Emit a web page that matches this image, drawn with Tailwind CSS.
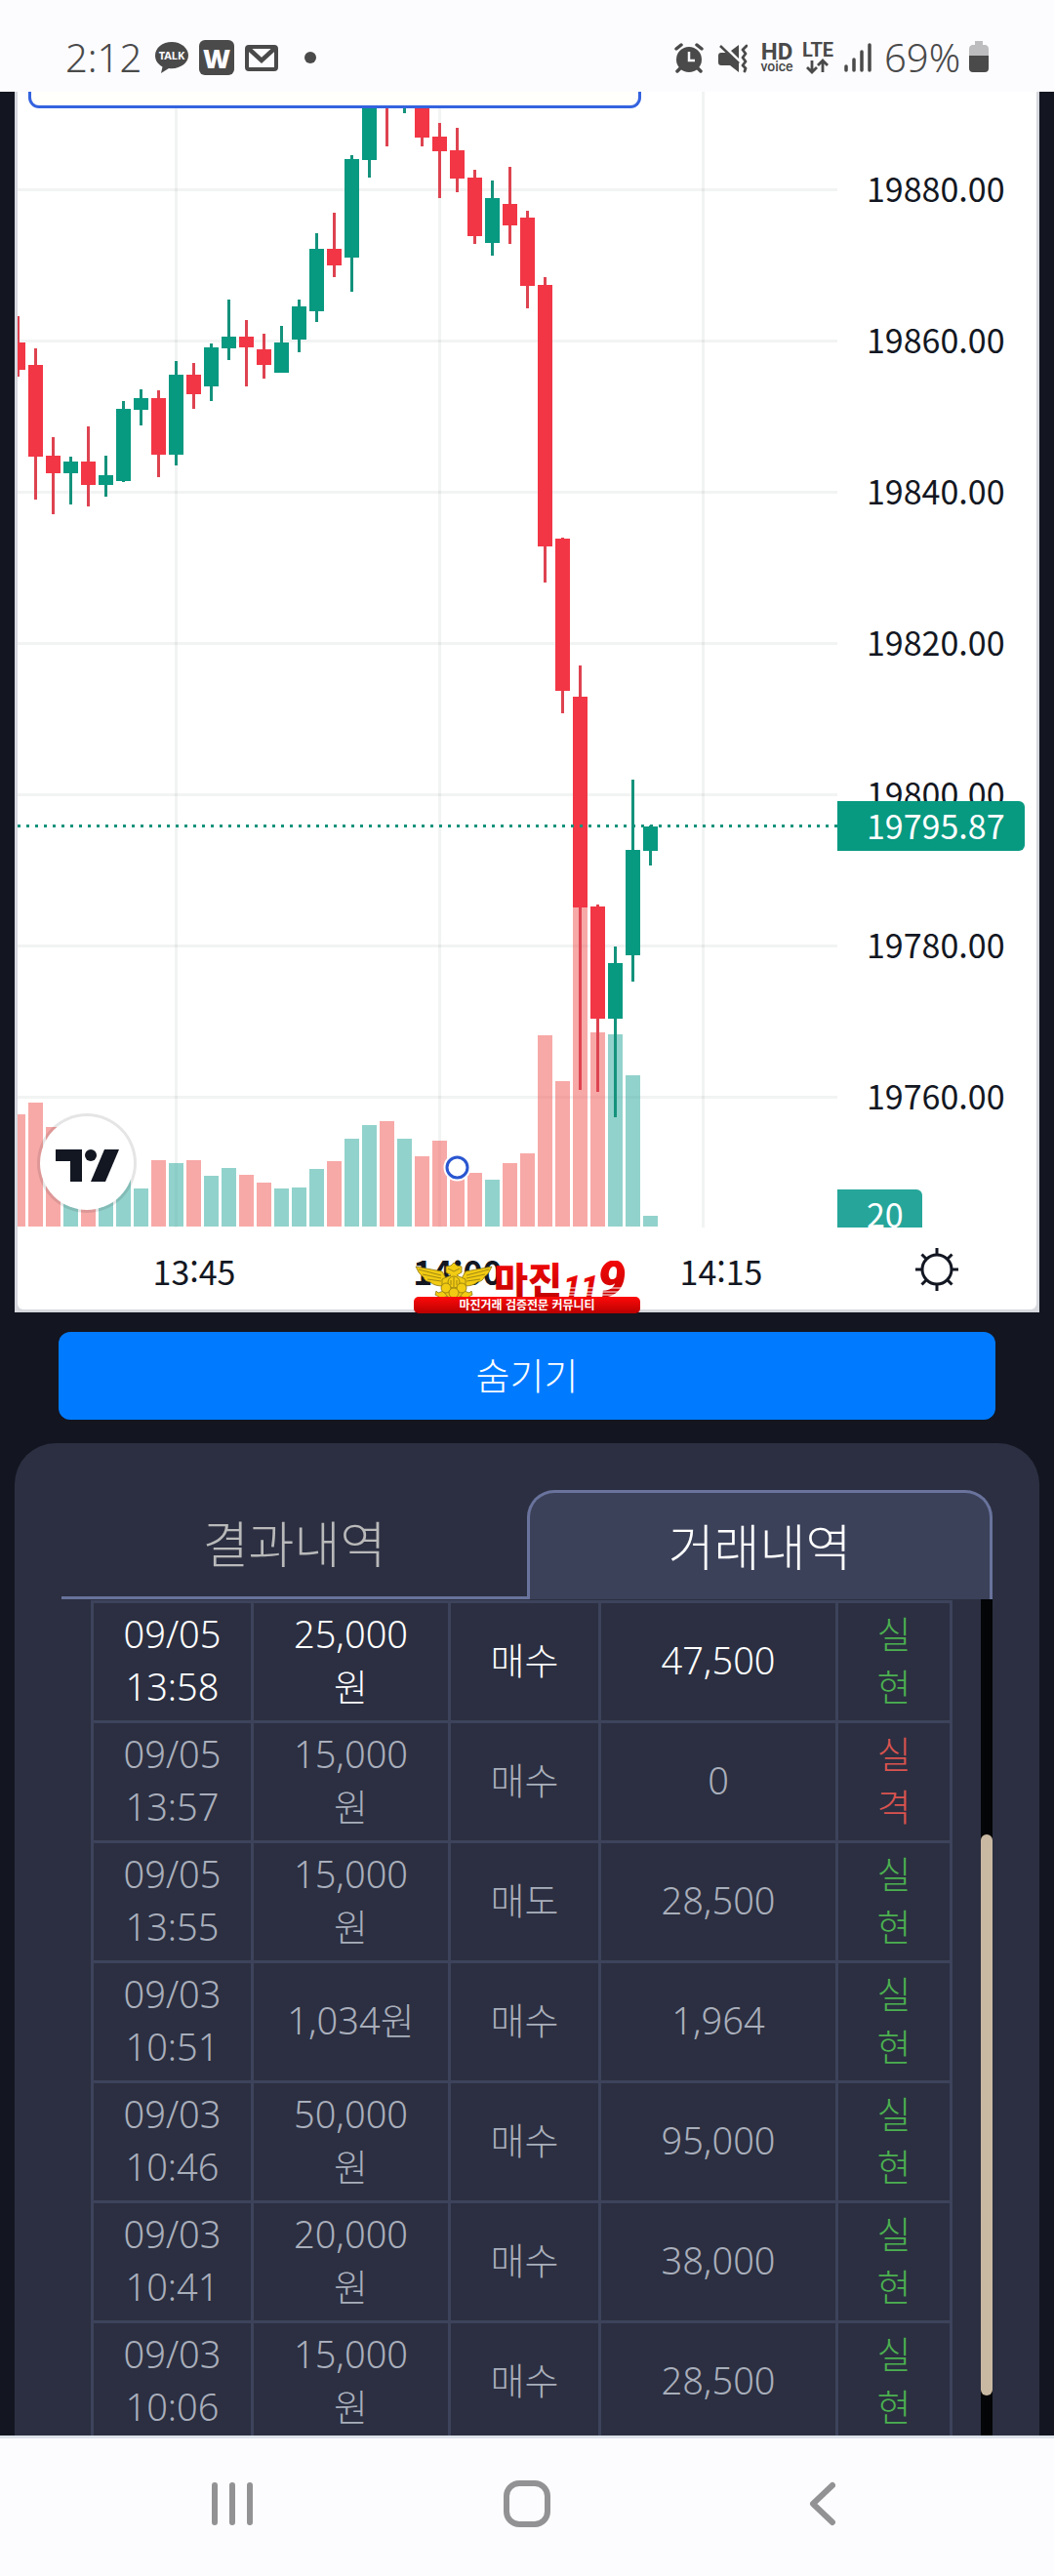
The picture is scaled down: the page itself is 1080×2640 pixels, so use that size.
<!DOCTYPE html>
<html lang="ko">
<head>
    <meta charset="UTF-8">
    <meta name="viewport" content="width=device-width, initial-scale=1.0">
    <title>거래내역</title>
    <script src="https://cdn.jsdelivr.net/npm/@tailwindcss/browser@4"></script>
</head>
<body class="flex h-screen flex-col overflow-hidden bg-[#131520] font-['Noto_Sans_CJK_KR',sans-serif]">
    <!-- 상태 표시줄 -->
    <header class="flex h-[94px] flex-none items-center justify-between bg-[#fcfcff] pt-6 pr-[66px] pl-[67px] text-[#4a4a4a]">
        <div class="flex items-center">
            <span class="w-[92px] font-['Noto_Sans','Noto_Sans_CJK_KR',sans-serif] text-[40px] leading-9 font-light">2:12</span>
            <svg class="h-9 w-[34px]" viewBox="0 0 34 36" aria-hidden="true">
                <path fill="currentColor" d="M17 2C7.500 2 0 8 0 16c0 5 3 9 7.500 11.500L6 34l8-5c1 .2 2 .2 3 .2 9.500 0 17-6 17-13.400S26.500 2 17 2z"/>
                <text x="17" y="20" text-anchor="middle" font-family="Noto Sans, sans-serif" font-size="11" font-weight="700" fill="#fcfcff">TALK</text>
            </svg>
            <span class="ml-[11px] flex size-9 items-center justify-center rounded-md bg-[#4a4a4a] font-['Open_Sans','Noto_Sans_CJK_KR',sans-serif] text-[27px] leading-none font-extrabold text-[#fcfcff]">W</span>
            <svg class="ml-[11px] h-9 w-[34px]" viewBox="0 0 34 36" aria-hidden="true">
                <rect x="2" y="7" width="30" height="23" rx="2" fill="none" stroke="currentColor" stroke-width="4"/>
                <path d="M4 9l13 12L30 9" fill="none" stroke="currentColor" stroke-width="4.500"/>
            </svg>
            <span class="ml-[27px] size-3 rounded-full bg-[#4a4a4a]"></span>
        </div>
        <div class="flex items-center">
            <svg class="h-9 w-[30px]" viewBox="0 0 30 36" aria-hidden="true">
                <circle cx="15" cy="20" r="13" fill="currentColor"/>
                <path d="M2 9l5-4M28 9l-5-4M6 29l-3 3M24 29l3 3" stroke="currentColor" stroke-width="3.500" stroke-linecap="round"/>
                <path d="M15 12v9h6" fill="none" stroke="#fcfcff" stroke-width="2.500"/>
            </svg>
            <svg class="ml-[15px] h-9 w-[30px]" viewBox="0 0 30 36" aria-hidden="true">
                <path fill="currentColor" d="M3 13h5l13 11v9l-9-7H3q-3 0-3-3v-7q0-3 3-3zM21 5v14l-8-8z"/>
                <path d="M2 6l19 18" stroke="currentColor" stroke-width="2.500"/>
                <path d="M29 6l-4 4 3 4-3 4 3 4-3 4 3 3-1 3" fill="none" stroke="currentColor" stroke-width="2.800" stroke-linejoin="round" stroke-linecap="round"/>
            </svg>
            <svg class="ml-[13px] h-9 w-[34px]" viewBox="0 0 34 36" font-family="Roboto, sans-serif" fill="currentColor" aria-hidden="true">
                <text x="17" y="20" text-anchor="middle" font-size="24" font-weight="700">HD</text>
                <text x="17" y="32" text-anchor="middle" font-size="14" font-weight="500">voice</text>
            </svg>
            <svg class="ml-2 h-9 w-[34px]" viewBox="0 0 34 36" aria-hidden="true">
                <text x="17" y="17" text-anchor="middle" font-family="Roboto, sans-serif" font-size="20" font-weight="700" fill="currentColor">LTE</text>
                <path d="M11 21v12M6 28l5 5 5-5M22 33V21M17 26l5-5 5 5" fill="none" stroke="currentColor" stroke-width="2.800"/>
            </svg>
            <svg class="ml-2.5 h-9 w-7" viewBox="0 0 28 36" aria-hidden="true">
                <path d="M2 27v4M10 20v11M18 12v19M26 5v26" stroke="currentColor" stroke-width="3.500" stroke-linecap="round"/>
            </svg>
            <span class="ml-[13px] w-[86px] font-['Noto_Sans','Noto_Sans_CJK_KR',sans-serif] text-[40px] leading-9 font-light">69%</span>
            <svg class="h-9 w-[22px]" viewBox="0 0 22 36" aria-hidden="true">
                <path fill="#bdbdbf" d="M7 1h8v4h3q3 1 3 4v9H1V9q0-3 3-4h3z"/>
                <path fill="currentColor" d="M1 16h20v13q0 4-4 4H5q-4 0-4-4z"/>
            </svg>
        </div>
    </header>

    <main class="flex min-h-0 flex-1 flex-col">
        <!-- 차트 -->
        <section class="mx-[15px] flex-none bg-[#d6d8de] px-[3px] pb-[3px]">
            <div class="relative rounded-b-md bg-white">
                <div class="absolute top-0 left-[11px] h-[17px] w-[628px] rounded-b-[11px] border-x-3 border-b-3 border-[#3463df] bg-[#fffffc]"></div>
                <div class="flex h-[1164px] overflow-hidden">
                    <div class="min-w-0 flex-1 overflow-hidden">
                        <svg id="chart" class="h-[1164px] w-[840px]" viewBox="18 94 840 1164" shape-rendering="crispEdges" role="img" aria-label="가격 차트"></svg>
                    </div>
                    <div class="relative w-[204px] pt-[21px] text-[34px] text-[#131722]">
                        <div class="flex h-[155px] items-center pl-[30px]">19880.00</div>
                        <div class="flex h-[155px] items-center pl-[30px]">19860.00</div>
                        <div class="flex h-[155px] items-center pl-[30px]">19840.00</div>
                        <div class="flex h-[155px] items-center pl-[30px]">19820.00</div>
                        <div class="flex h-[155px] items-center pl-[30px]">19800.00</div>
                        <div class="flex h-[155px] items-center pl-[30px]">19780.00</div>
                        <div class="flex h-[155px] items-center pl-[30px]">19760.00</div>
                        <div class="absolute top-[727px] left-0 flex h-[51px] w-48 items-center rounded-r-md bg-[#089981] pb-[3px] pl-[30px] text-white">19795.87</div>
                        <div class="absolute top-[1125px] left-0 flex h-[51px] w-[87px] items-center rounded-r-md bg-[#26a69a] pb-[3px] pl-[30px] text-white">20</div>
                    </div>
                </div>
                <!-- 시간 축 -->
                <div class="flex h-[84px] items-center pt-1 text-[34px] text-[#131722]">
                    <div class="flex min-w-0 flex-1 pl-[46px]">
                        <span class="w-[270px] flex-none text-center">13:45</span>
                        <span class="w-[270px] flex-none text-center font-bold">14:00</span>
                        <span class="w-[270px] flex-none text-center">14:15</span>
                    </div>
                    <button type="button" aria-label="설정" class="flex w-[204px] flex-none justify-center">
                        <svg class="size-[46px]" viewBox="0 0 46 46" fill="none" stroke="#131722" stroke-width="3" aria-hidden="true">
                            <circle cx="23" cy="22" r="15"/>
                            <path d="M23 7V0M23 37v7M8 22H1M38 22h7M12.500 11.500l-5-5M33.500 11.500l5-5M12.500 32.500l-5 5M33.500 32.500l5 5"/>
                        </svg>
                    </button>
                </div>
                <!-- TradingView 로고 -->
                <a href="#" aria-label="TradingView" class="absolute top-[1047px] left-5 size-[102px] rounded-full border-3 border-black/10 bg-white bg-clip-padding">
                    <svg viewBox="0 0 96 96" fill="#131722" aria-hidden="true">
                        <path d="M16 34h27v33H31V46H16z"/>
                        <circle cx="52" cy="40" r="6"/>
                        <path d="M66 34h15L67 67H52z"/>
                    </svg>
                </a>
                <!-- 배너 로고 -->
                <div class="absolute top-[1198px] left-[406px] w-[232px]">
                    <svg class="h-[54px] w-[232px]" viewBox="0 0 232 54" aria-hidden="true">
                        <defs>
                            <linearGradient id="red" x1="0" y1="0" x2="0" y2="1">
                                <stop offset="0" stop-color="#ff0a0a"/>
                                <stop offset="1" stop-color="#b90000"/>
                            </linearGradient>
                        </defs>
                        <g fill="#f2cb13" stroke="#8d7710" stroke-width=".8" stroke-linejoin="round">
                            <path d="M2 6l27 5 4 7-3 8q-9 0-13-4-6-1-7-5-5-3-8-11zM80 6l-27 5-4 7 3 8q9 0 13-4 6-1 7-5 5-3 8-11z"/>
                            <path d="M5 9l23 6M9 14l19 4M14 19l14 2M77 9l-23 6M73 14l-19 4M68 19l-14 2" fill="none"/>
                            <path d="M33 30l-8 3-2-2-1 4 4 2-1 3 4-1 7-4M49 30l8 3 2-2 1 4-4 2 1 3-4-1-7-4"/>
                            <path d="M33 6l5-1 3-3 3 3 5 1v6l-5 3 9 4v11l-6 7-6 3-6-3-6-7V19l9-4-5-3z"/>
                            <circle cx="41" cy="22" r="6"/>
                            <circle cx="33" cy="28" r="5"/>
                            <circle cx="49" cy="28" r="5"/>
                            <circle cx="41" cy="33" r="5"/>
                            <path d="M41 17v10M38 20v5M44 20v5M35 8l6 3 6-3" fill="none"/>
                        </g>
                        <g font-weight="900" fill="url(#red)">
                            <text x="82" y="34" font-family="Noto Sans CJK KR, sans-serif" font-size="38">마진</text>
                            <text x="153" y="37" font-family="Roboto, sans-serif" font-size="32" font-style="italic">11</text>
                            <text x="188" y="37" font-family="Roboto, sans-serif" font-size="52" font-style="italic">9</text>
                        </g>
                        <path d="M153 28h78M153 32h78M153 35h78" stroke="#fff" stroke-width="1"/>
                        <rect y="37" width="232" height="17" rx="5" fill="url(#red)"/>
                        <text x="116" y="50" text-anchor="middle" font-family="Noto Sans CJK KR, sans-serif" font-size="12" font-weight="700" fill="#fff">마진거래 검증전문 커뮤니티</text>
                    </svg>
                </div>
            </div>
        </section>

        <button type="button" class="mx-[60px] mt-5 h-[90px] flex-none rounded-xl bg-[#007bff] pb-1.5 text-[38px] font-light text-white">숨기기</button>

        <!-- 내역 패널 -->
        <section class="mx-[15px] mt-6 flex min-h-0 flex-1 flex-col rounded-t-[42px] bg-[#2b2f41] px-12 pt-12">
            <div class="grid h-28 flex-none grid-cols-2 text-[51px]" role="tablist">
                <button type="button" role="tab" aria-selected="false" class="border-b-3 border-[#69739c] pb-[3px] font-light text-[#b9b9ba]">결과내역</button>
                <button type="button" role="tab" aria-selected="true" class="rounded-t-[28px] border-x-3 border-t-3 border-[#69739c] bg-[#3b4159] pb-[3px] font-light text-white">거래내역</button>
            </div>
            <div class="flex min-h-0 flex-1 justify-between pl-[30px]">
                <div class="mr-[29px] min-w-0 flex-1 overflow-hidden pt-px">
                    <table class="w-full table-fixed border-collapse text-center font-['Noto_Sans','Noto_Sans_CJK_KR',sans-serif] text-[38px] leading-[54px] font-light text-[#a9aebb] [&_td]:border-3 [&_td]:border-[#3d435b] [&_td]:pt-1 [&_td]:pb-2">
                        <colgroup>
                            <col class="w-[164px]">
                            <col class="w-[202px]">
                            <col class="w-[154px]">
                            <col class="w-[243px]">
                            <col class="w-[117px]">
                        </colgroup>
                        <tbody>
                            <tr class="text-white">
                                <td>09/05<br>13:58</td>
                                <td>25,000<br>원</td>
                                <td>매수</td>
                                <td>47,500</td>
                                <td class="text-[#4caf50]">실<br>현</td>
                            </tr>
                            <tr>
                                <td>09/05<br>13:57</td>
                                <td>15,000<br>원</td>
                                <td>매수</td>
                                <td>0</td>
                                <td class="text-[#d9534f]">실<br>격</td>
                            </tr>
                            <tr>
                                <td>09/05<br>13:55</td>
                                <td>15,000<br>원</td>
                                <td>매도</td>
                                <td>28,500</td>
                                <td class="text-[#4caf50]">실<br>현</td>
                            </tr>
                            <tr>
                                <td>09/03<br>10:51</td>
                                <td>1,034원</td>
                                <td>매수</td>
                                <td>1,964</td>
                                <td class="text-[#4caf50]">실<br>현</td>
                            </tr>
                            <tr>
                                <td>09/03<br>10:46</td>
                                <td>50,000<br>원</td>
                                <td>매수</td>
                                <td>95,000</td>
                                <td class="text-[#4caf50]">실<br>현</td>
                            </tr>
                            <tr>
                                <td>09/03<br>10:41</td>
                                <td>20,000<br>원</td>
                                <td>매수</td>
                                <td>38,000</td>
                                <td class="text-[#4caf50]">실<br>현</td>
                            </tr>
                            <tr>
                                <td>09/03<br>10:06</td>
                                <td>15,000<br>원</td>
                                <td>매수</td>
                                <td>28,500</td>
                                <td class="text-[#4caf50]">실<br>현</td>
                            </tr>
                        </tbody>
                    </table>
                </div>
                <!-- 스크롤바 -->
                <div class="w-3 flex-none bg-[#040507] pt-[241px]">
                    <div class="h-[575px] rounded-full bg-[#c9b9a2]"></div>
                </div>
            </div>
        </section>
    </main>

    <!-- 하단 내비게이션 -->
    <nav class="flex h-36 flex-none items-center justify-center gap-[230px] border-t-3 border-[#dde3ea] bg-[#fcfcff] pb-2 text-[#929294]">
        <button type="button" aria-label="최근 앱" class="flex w-[72px] justify-center">
            <svg class="h-12 w-[42px]" viewBox="0 0 42 48" aria-hidden="true">
                <path d="M3 5v38M21 5v38M39 5v38" stroke="currentColor" stroke-width="6" stroke-linecap="round"/>
            </svg>
        </button>
        <button type="button" aria-label="홈" class="flex w-[72px] justify-center">
            <svg class="size-12" viewBox="0 0 48 48" aria-hidden="true">
                <rect x="3" y="3" width="42" height="42" rx="13" fill="none" stroke="currentColor" stroke-width="6"/>
            </svg>
        </button>
        <button type="button" aria-label="뒤로" class="flex w-[72px] justify-center">
            <svg class="h-12 w-[27px]" viewBox="0 0 27 48" aria-hidden="true">
                <path d="M24 5L4 24l20 19" fill="none" stroke="currentColor" stroke-width="6" stroke-linecap="round" stroke-linejoin="round"/>
            </svg>
        </button>
    </nav>

    <script>
        // [방향, 고가, 몸통 위, 몸통 아래, 저가, 거래량 위] (y 좌표)
        const candles = [
            ['r', 324, 351, 379, 386, 1142], ['r', 357, 374, 468, 512, 1130], ['r', 448, 467, 485, 527, 1155],
            ['g', 468, 473, 485, 517, 1215], ['r', 437, 473, 497, 519, 1210], ['g', 467, 487, 497, 509, 1220],
            ['g', 411, 419, 493, 494, 1205], ['g', 399, 408, 420, 436, 1218], ['r', 400, 408, 466, 489, 1189],
            ['g', 370, 384, 466, 477, 1192], ['r', 372, 384, 404, 419, 1189], ['g', 352, 356, 396, 411, 1205],
            ['g', 307, 345, 357, 369, 1197], ['r', 328, 345, 356, 396, 1204], ['r', 342, 358, 374, 388, 1212],
            ['g', 334, 351, 382, 382, 1218], ['g', 307, 314, 348, 361, 1217], ['g', 239, 255, 319, 330, 1198],
            ['r', 218, 255, 272, 284, 1190], ['g', 159, 163, 264, 299, 1167], ['g', 94, 94, 164, 182, 1153],
            ['r', 94, 94, 96, 150, 1149], ['g', 94, 94, 96, 116, 1167], ['r', 94, 94, 141, 150, 1185],
            ['r', 126, 140, 155, 203, 1169], ['r', 131, 154, 183, 197, 1205], ['r', 174, 182, 242, 250, 1202],
            ['g', 185, 203, 249, 262, 1209], ['r', 171, 209, 231, 250, 1192], ['r', 216, 223, 293, 316, 1182],
            ['r', 284, 292, 560, 597, 1061], ['r', 551, 552, 708, 731, 1108], ['r', 682, 714, 930, 1117, 900],
            ['r', 927, 929, 1044, 1119, 1058], ['g', 970, 987, 1044, 1145, 1060], ['g', 799, 871, 979, 1006, 1102],
            ['g', 846, 847, 872, 887, 1246]
        ];
        const rect = (x, y, w, h, fill) => `<rect x="${x}" y="${y}" width="${w}" height="${h}" fill="${fill}"/>`;
        const bottom = 1257;
        let html = '';
        // 격자
        for (let i = 0; i < 7; i++) html += rect(18, 193 + i * 155, 840, 3, '#2a39390f');
        for (let i = 0; i < 3; i++) html += rect(179 + i * 270, 94, 3, 1164, '#2a39390f');
        // 거래량
        candles.forEach((c, i) => {
            html += rect(11 + i * 18, c[5], 15, bottom - c[5], c[0] === 'r' ? '#ef535080' : '#26a69a80');
        });
        // 캔들
        candles.forEach((c, i) => {
            const x = 11 + i * 18;
            html += rect(x + 6, c[1], 3, c[4] - c[1], c[0] === 'r' ? '#de4350' : '#14927c');
            html += rect(x, c[2], 15, c[3] - c[2], c[0] === 'r' ? '#f23645' : '#089981');
        });
        html += '<path d="M18 846.5H858" stroke="#14927c" stroke-width="3" stroke-dasharray="3 6"/>';
        html += '<g shape-rendering="auto"><circle cx="468.5" cy="1196.500" r="14" fill="#fff"/><circle cx="468.5" cy="1196.500" r="10.500" fill="#fff" stroke="#2a56d0" stroke-width="3"/></g>';
        document.getElementById('chart').innerHTML = html;
    </script>
</body>
</html>
